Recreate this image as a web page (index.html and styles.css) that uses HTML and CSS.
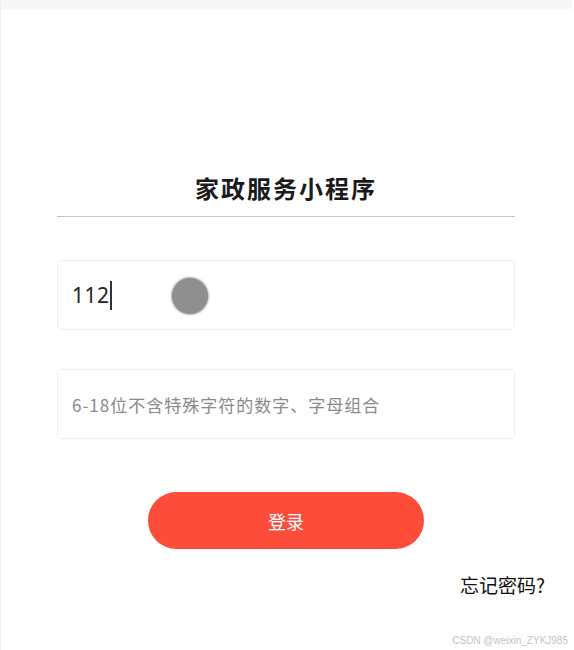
FILE: index.html
```html
<!DOCTYPE html>
<html lang="zh">
<head>
<meta charset="utf-8">
<title>家政服务小程序</title>
<link rel="stylesheet" href="styles.css">
</head>
<body>
<div class="topbar"></div>
<main class="page">
  <h1 class="title">家政服务小程序</h1>
  <div class="field field-user">
    <span class="value">112</span><span class="caret"></span>
    <span class="touch"></span>
  </div>
  <div class="field">
    <span class="placeholder">6-18位不含特殊字符的数字、字母组合</span>
  </div>
  <div class="actions">
    <button class="login">登录</button>
  </div>
  <div class="forgot">忘记密码?</div>
</main>
<div class="watermark">CSDN @weixin_ZYKJ985</div>
</body>
</html>
```
FILE: styles.css
```css
html, body {
  margin: 0;
  padding: 0;
  background: #ffffff;
}
body {
  width: 574px;
  height: 650px;
  position: relative;
  overflow: hidden;
  font-family: "Noto Sans CJK SC", "Noto Sans", sans-serif;
  border-left: 1px solid #efefef;
  box-sizing: border-box;
}
.topbar {
  height: 9px;
  background: #f7f7f7;
  margin-right: 2px;
}
.page {
  padding: 0 59px 0 56px;
  display: flex;
  flex-direction: column;
}
.title {
  margin: 161px 0 0;
  font-size: 24px;
  line-height: 36px;
  font-weight: 700;
  color: #1a1a1a;
  text-align: center;
  padding-bottom: 10px;
  border-bottom: 1px solid #c4c4c4;
  letter-spacing: 2px;
}
.field {
  position: relative;
  height: 70px;
  box-sizing: border-box;
  border: 1px solid #eeeeee;
  border-radius: 5px;
  display: flex;
  align-items: center;
  padding-left: 14px;
}
.field-user {
  margin-top: 43px;
}
.field + .field {
  margin-top: 39px;
}
.value {
  font-family: "Noto Sans", sans-serif;
  font-size: 21px;
  color: #222;
  letter-spacing: 0.5px;
}
.caret {
  width: 2px;
  height: 29px;
  background: #333;
  margin-left: 0;
}
.touch {
  position: absolute;
  left: 114px;
  top: 17px;
  width: 36px;
  height: 36px;
  border-radius: 50%;
  background: #8f8f8f;
  box-shadow: 0 0 2px 1px #b3b3b3;
}
.placeholder {
  font-size: 17px;
  color: #8a8a8a;
  letter-spacing: 1px;
}
.actions {
  display: flex;
  justify-content: center;
  margin-top: 53px;
}
.login {
  width: 276px;
  height: 57px;
  border: none;
  border-radius: 29px;
  background: #fe4c3b;
  color: #ffffff;
  font-family: inherit;
  font-size: 18px;
}
.forgot {
  align-self: flex-end;
  margin: 23px -30px 0 0;
  font-size: 19px;
  line-height: 26px;
  color: #111;
}
.watermark {
  position: absolute;
  right: 6px;
  bottom: 4px;
  font-family: "Liberation Sans", Arial, sans-serif;
  font-size: 10px;
  color: #c4c4c4;
}
```
